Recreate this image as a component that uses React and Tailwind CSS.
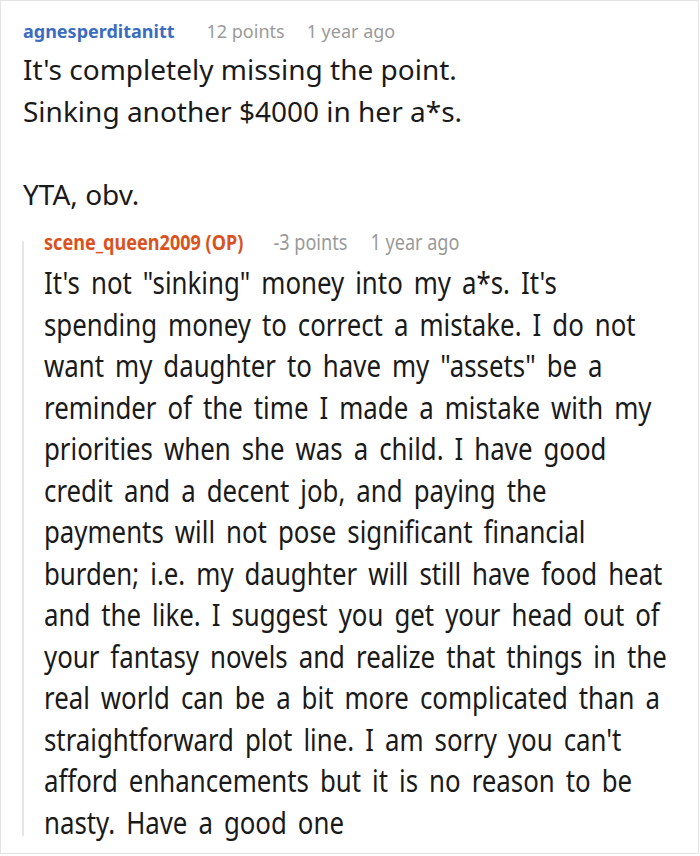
const replyLines = [
  "It's not \"sinking\" money into my a*s. It's",
  'spending money to correct a mistake. I do not',
  'want my daughter to have my "assets" be a',
  'reminder of the time I made a mistake with my',
  'priorities when she was a child. I have good',
  'credit and a decent job, and paying the',
  'payments will not pose significant financial',
  'burden; i.e. my daughter will still have food heat',
  'and the like. I suggest you get your head out of',
  'your fantasy novels and realize that things in the',
  'real world can be a bit more complicated than a',
  "straightforward plot line. I am sorry you can't",
  'afford enhancements but it is no reason to be',
  'nasty. Have a good one',
];

const Meta = ({ name, color, points, gap1, gap2, size }) => (
  <div className={`flex items-baseline ${size}`}>
    <span className={`font-bold ${color}`}>{name}</span>
    <span className={`${gap1} text-[#9a9a9a]`}>{points}</span>
    <span className={`${gap2} text-[#9a9a9a]`}>1 year ago</span>
  </div>
);

export default function App() {
  return (
    <div className="bg-white font-['Noto_Sans',sans-serif]">
      <div className="flex h-[854px] w-[699px] flex-col overflow-hidden border border-[#e3e3e3] text-[#1a1a1a]">
        <div className="flex flex-col gap-[6px] pl-[22px] pt-[18px]">
          <Meta
            name="agnesperditanitt"
            color="text-[#3b6cbf]"
            points="12 points"
            gap1="ml-[32px]"
            gap2="ml-[22px]"
            size="text-[18px] leading-[24px]"
          />
          <div className="flex flex-col text-[28px] leading-[41.5px]">
            <div>It's completely missing the point.</div>
            <div>Sinking another $4000 in her a*s.</div>
            <div>&nbsp;</div>
            <div>YTA, obv.</div>
          </div>
        </div>

        <div className="ml-[21px] mt-[26px] h-[595px] border-l-2 border-[#e6e6e6] pl-[20px]">
          <div className="-mt-[8px] flex w-[780px] origin-left scale-x-[0.86] flex-col gap-[11px]">
            <Meta
              name="scene_queen2009 (OP)"
              color="text-[#d9531e]"
              points="-3 points"
              gap1="ml-[35px]"
              gap2="ml-[27px]"
              size="text-[21px] leading-[18px]"
            />
            <div className="flex flex-col text-[30px] leading-[41.5px] [word-spacing:5px]">
              {replyLines.map((line, i) => (
                <div key={i} className="whitespace-nowrap">{line}</div>
              ))}
            </div>
          </div>
        </div>
      </div>
    </div>
  );
}
